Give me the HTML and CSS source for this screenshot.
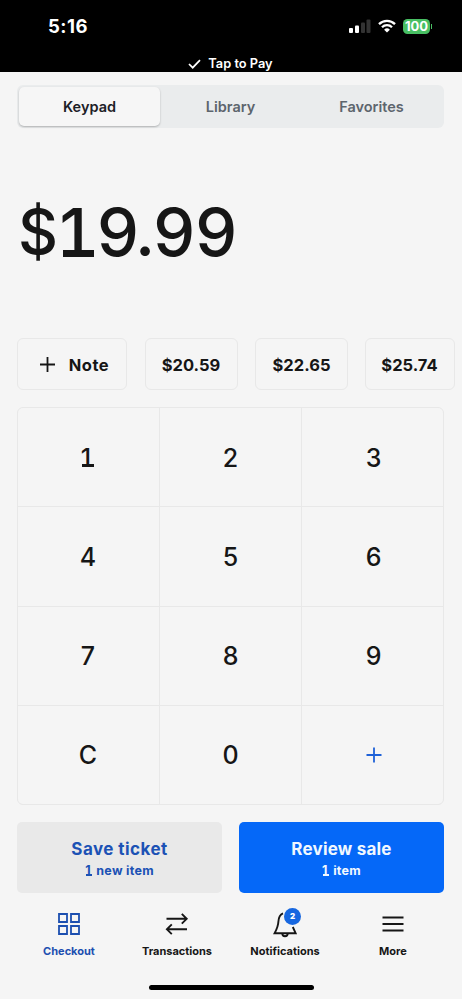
FILE: index.html
```html
<!DOCTYPE html>
<html lang="en">
<head>
<meta charset="utf-8">
<meta name="viewport" content="width=device-width, initial-scale=1">
<title>Checkout</title>
<link rel="stylesheet" href="styles.css">
</head>
<body>
<header class="top">
  <div class="status">
    <time class="clock">5:16</time>
    <div class="status-icons">
      <svg class="signal" width="22" height="14" viewBox="0 0 22 14"><rect x="0" y="9" width="4" height="5" rx="1" fill="#fff"/><rect x="6" y="6.5" width="4" height="7.5" rx="1" fill="#fff"/><rect x="12" y="3.5" width="4" height="10.5" rx="1" fill="#333"/><rect x="17.500" y="0.500" width="4" height="13.500" rx="1" fill="#333"/></svg>
      <svg class="wifi" width="18" height="14" viewBox="0 0 18 14" fill="none" stroke="#fff" stroke-width="2.300"><path d="M1 5.100a11.300 11.300 0 0 1 16 0"/><path d="M4 8.300a7 7 0 0 1 10 0"/><path d="M9 13.500 6.100 10.700a4.200 4.200 0 0 1 5.800 0z" fill="#fff" stroke="none"/></svg>
      <span class="battery">100</span><i class="battery-tip"></i>
    </div>
  </div>
  <div class="tap">
    <svg width="13" height="10" viewBox="0 0 13 10" fill="none" stroke="#fff" stroke-width="1.700"><path d="M1 5l3.700 3.700L12 1.100"/></svg>
    <span>Tap to Pay</span>
  </div>
</header>
<main class="page">
  <div class="tabs">
    <button class="tab active">Keypad</button>
    <button class="tab">Library</button>
    <button class="tab">Favorites</button>
  </div>
  <div class="amount"><span class="dollar">$</span><span class="one">1</span><span class="tight">9.</span>99</div>
  <div class="chips">
    <button class="chip note"><svg width="15" height="15" viewBox="0 0 15 15" stroke="#161616" stroke-width="1.800"><path d="M7.500 0v15M0 7.500h15"/></svg><span>Note</span></button>
    <button class="chip">$20.59</button>
    <button class="chip">$22.65</button>
    <button class="chip">$25.74</button>
  </div>
  <div class="keypad">
    <button class="key"><span class="one">1</span></button>
    <button class="key">2</button>
    <button class="key">3</button>
    <button class="key">4</button>
    <button class="key">5</button>
    <button class="key">6</button>
    <button class="key">7</button>
    <button class="key">8</button>
    <button class="key">9</button>
    <button class="key">C</button>
    <button class="key">0</button>
    <button class="key"><svg width="16" height="16" viewBox="0 0 16 16" stroke="#1f62d8" stroke-width="1.800"><path d="M8 .5v15M.5 8h15"/></svg></button>
  </div>
  <div class="actions">
    <button class="action save"><span class="title">Save ticket</span><span class="sub"><span class="one">1</span> new item</span></button>
    <button class="action review"><span class="title">Review sale</span><span class="sub"><span class="one">1</span> item</span></button>
  </div>
</main>
<nav class="nav">
  <a class="nav-item current"><svg width="24" height="24" viewBox="0 0 24 24" fill="none" stroke="currentColor" stroke-width="1.800"><path d="M2 2h8v8H2zM14 2h8v8h-8zM2 14h8v8H2zM14 14h8v8h-8z"/></svg><span>Checkout</span></a>
  <a class="nav-item"><svg width="24" height="24" viewBox="0 0 24 24" fill="none" stroke="currentColor" stroke-width="1.900"><path d="M1.500 6.800h20M16.800 1.900l4.900 4.900-4.900 4.900M22 17.300H2M6.800 12.400l-4.900 4.900 4.900 4.900"/></svg><span>Transactions</span></a>
  <a class="nav-item"><span class="bell"><svg width="24" height="26" viewBox="0 0 24 26" fill="none" stroke="currentColor" stroke-width="1.900"><path d="M10 1.300C6.400 2.700 5.600 6 5.400 9.500 5.200 14 3.900 17 1.600 21.200h21L19.800 15"/><path d="M9.300 21.500a2.700 2.700 0 0 0 5.400 0"/></svg><b class="badge">2</b></span><span>Notifications</span></a>
  <a class="nav-item"><svg width="24" height="24" viewBox="0 0 24 24" fill="none" stroke="currentColor" stroke-width="1.900"><path d="M1.500 5.500h21M1.500 12h21M1.500 18.500h21"/></svg><span>More</span></a>
</nav>
<div class="home"></div>
</body>
</html>
```
FILE: styles.css
```css
* { box-sizing: border-box; }
body {
  margin: 0;
  width: 462px;
  height: 999px;
  overflow: hidden;
  background: #f5f5f5;
  color: #161616;
  font-family: Inter, "Liberation Sans", sans-serif;
}
button {
  border: 0;
  padding: 0;
  margin: 0;
  background: none;
  color: inherit;
  font: inherit;
}
svg { display: block; flex: none; }

.top {
  height: 72px;
  background: #000;
  color: #fff;
}
.status {
  height: 52px;
  padding: 0 30px 0 48px;
  display: flex;
  align-items: center;
  justify-content: space-between;
}
.clock { font-size: 18.500px; font-weight: 700; letter-spacing: .5px; }
.status-icons { display: flex; align-items: center; }
.wifi { margin: 0 7px; }
.battery {
  width: 27px;
  height: 15px;
  border-radius: 4.500px;
  background: #48bf63;
  font-size: 13px;
  line-height: 15px;
  font-weight: 700;
  text-align: center;
}
.battery-tip { width: 1px; height: 5px; margin-left: 1px; background: #48bf63; }
.tap {
  display: flex;
  align-items: center;
  justify-content: center;
  gap: 7px;
  height: 17px;
  margin-top: 3px;
  padding-right: 1px;
  font-size: 12.800px;
  line-height: 17px;
  font-weight: 600;
}

.page { padding: 13px 18px 0 17px; }
.tabs {
  display: grid;
  grid-template-columns: repeat(3, 1fr);
  height: 43px;
  padding: 2px;
  border-radius: 6px;
  background: #eaeced;
}
.tab {
  font-size: 14.500px;
  font-weight: 600;
  color: #5d656d;
  border-radius: 5px;
}
.tab.active {
  background: #f6f6f6;
  color: #1c2026;
  box-shadow: 0 1px 2px rgba(0, 0, 0, .25);
}

/* Numeral one with a foot serif */
.one {
  position: relative;
  display: inline-block;
  width: .5em;
  margin: 0 .07em;
  text-align: center;
  text-indent: -.16em;
}
.one::after {
  content: "";
  position: absolute;
  left: 0;
  right: 0;
  bottom: calc((1.210em - .727em) / 2 - .005em);
  height: .1em;
  background: currentColor;
}
.amount {
  height: 210px;
  padding: 0 0 2px 1px;
  display: flex;
  align-items: center;
  font-size: 66.500px;
  line-height: 1.210;
  font-weight: 500;
}
.dollar { font-size: 62px; width: 42px; }
.amount .one { width: 31px; margin: 0 3px 0 3px; }
.tight { letter-spacing: -2px; }
.chips { display: flex; gap: 17.500px; width: 438px; }
.chip {
  width: 93px;
  height: 52px;
  flex: none;
  padding-top: 1px;
  border: 1px solid #e8e8e8;
  border-radius: 6px;
  font-size: 16.500px;
  font-weight: 700;
}
.chip:last-child { width: 90px; margin-left: -1px; }
.chip.note {
  width: 110px;
  display: flex;
  align-items: center;
  justify-content: center;
  gap: 14px;
  padding-left: 5px;
  letter-spacing: .5px;
}
.note svg { margin-top: -1px; }
.keypad {
  display: grid;
  grid-template-columns: repeat(3, 1fr);
  grid-template-rows: repeat(4, 1fr);
  gap: 1px;
  height: 398px;
  margin-top: 17px;
  border: 1px solid #e8e8e8;
  border-radius: 6px;
  background: #e8e8e8;
  overflow: hidden;
}
.key {
  display: flex;
  align-items: center;
  justify-content: center;
  padding-top: 1px;
  background: #f5f5f5;
  font-size: 25px;
  line-height: 1.210;
  font-weight: 500;
}
.key:nth-child(3n + 1) { padding-right: 1px; }
.key:nth-child(3n) { padding-left: 2px; }
.actions {
  display: grid;
  grid-template-columns: 1fr 1fr;
  gap: 17px;
  margin-top: 17px;
}
.action {
  height: 71px;
  display: flex;
  flex-direction: column;
  align-items: center;
  justify-content: center;
  border-radius: 5px;
  font-weight: 700;
}
.save { background: #e9e9e9; color: #1c52b5; }
.review { background: #0568f8; color: #f1f8ff; }
.title { font-size: 17px; line-height: 22px; letter-spacing: .2px; padding-top: 2px; }
.save .title { letter-spacing: .45px; }
.sub { font-size: 12.500px; line-height: 1.210; margin-top: 3px; letter-spacing: .3px; }

.nav {
  display: grid;
  grid-template-columns: repeat(4, 108px);
  padding: 0 15px;
  margin-top: 19px;
}
.nav-item {
  display: flex;
  flex-direction: column;
  align-items: center;
  font-size: 11px;
  line-height: 14px;
  font-weight: 700;
}
.nav-item > svg, .bell { height: 24px; margin-bottom: 8px; }
.current { color: #1c4fb0; }
.bell { position: relative; }
.badge {
  position: absolute;
  left: 11px;
  top: -4px;
  width: 17px;
  height: 17px;
  border-radius: 50%;
  background: #1767e0;
  color: #fff;
  font-size: 8px;
  line-height: 17px;
  text-align: center;
}
.home {
  width: 165px;
  height: 5px;
  margin: 27px auto 0;
  border-radius: 3px;
  background: #000;
}
```
